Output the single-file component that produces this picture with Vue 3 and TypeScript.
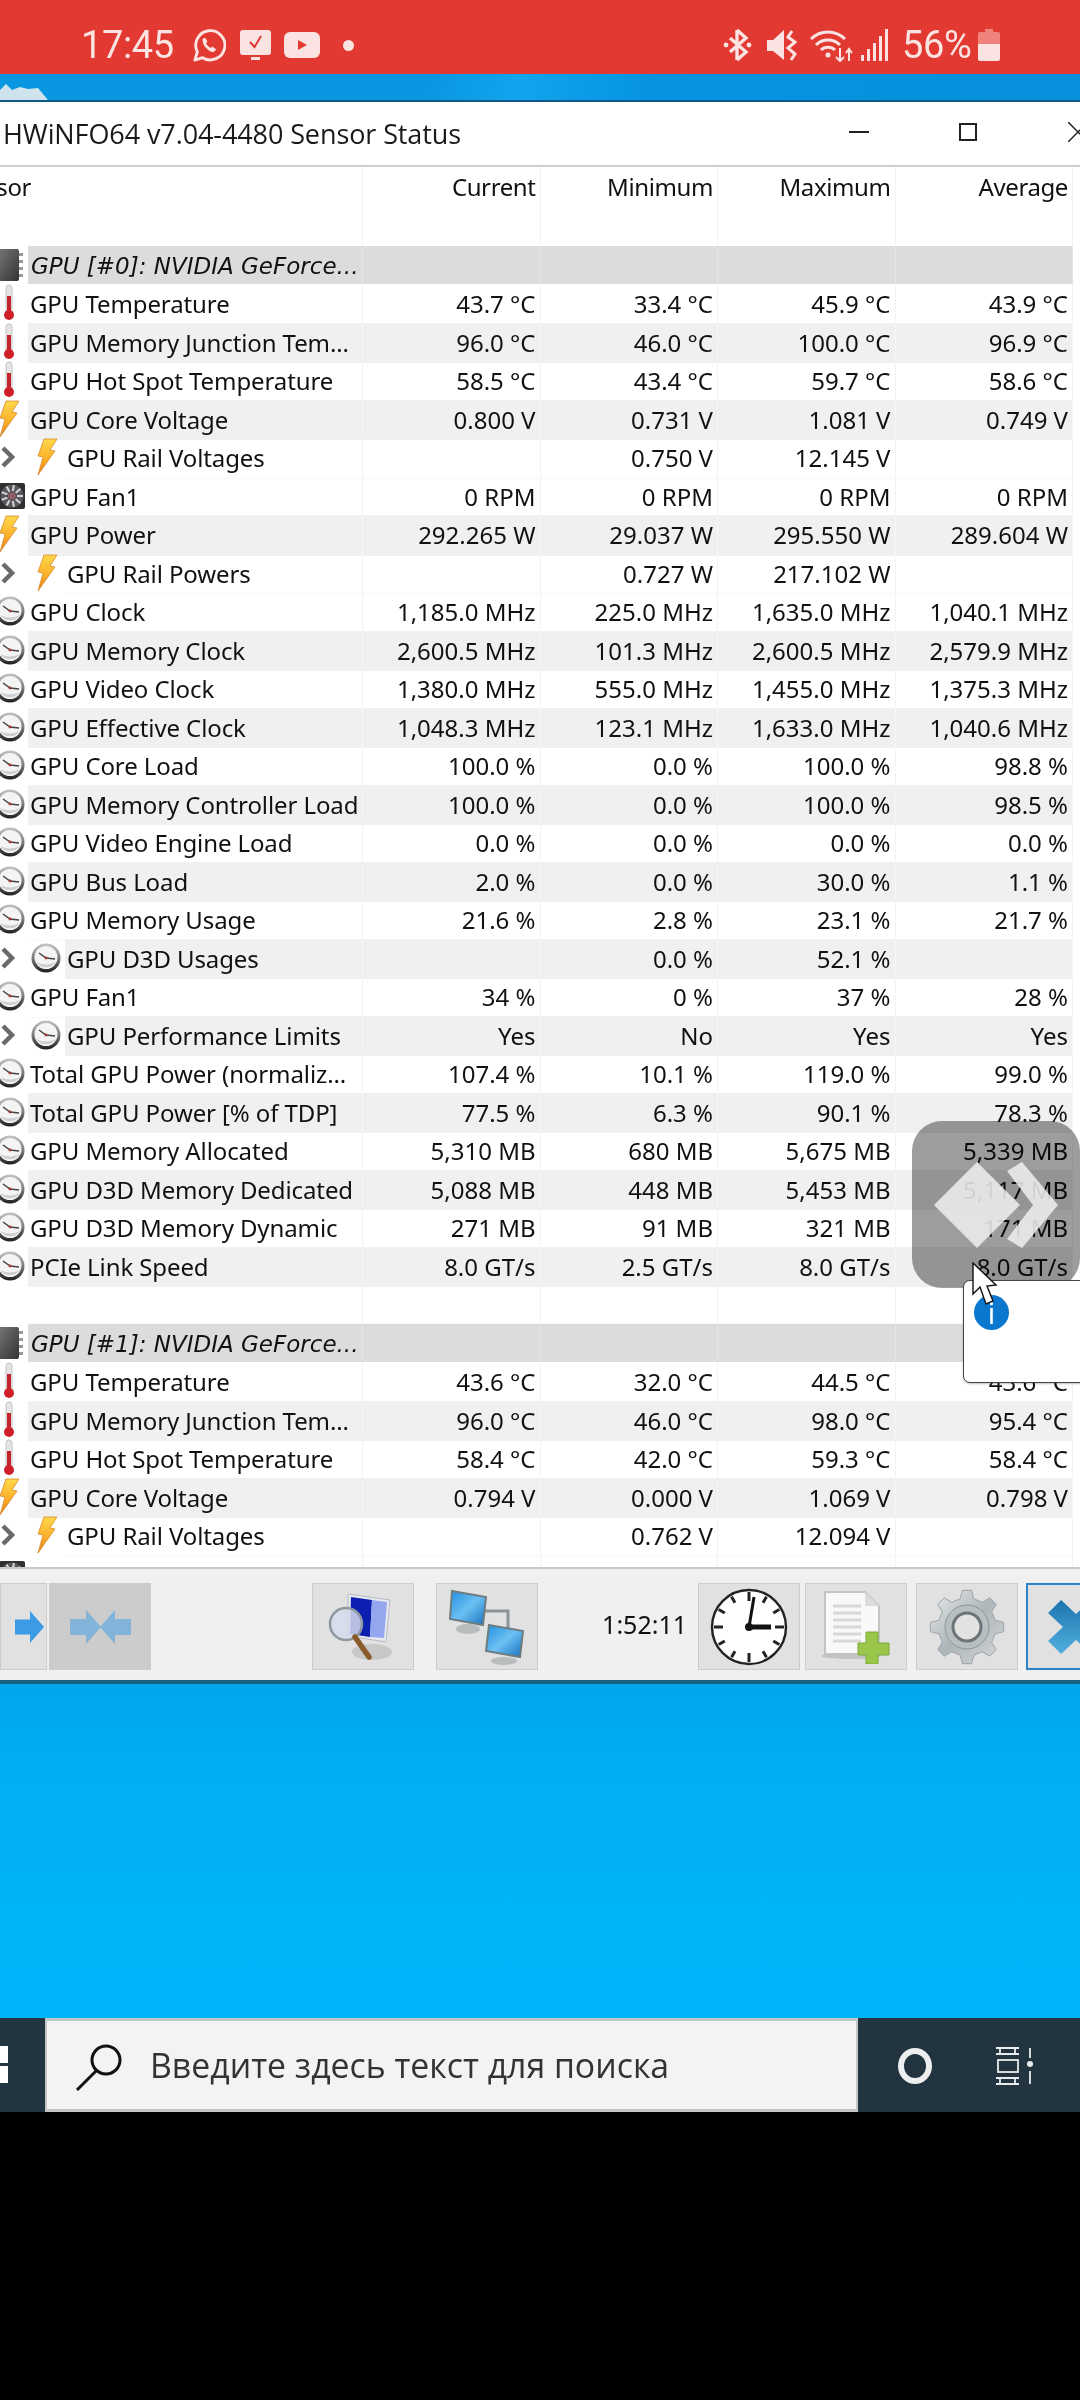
<template>
  <div class="screen">
    <svg class="sprite" width="0" height="0">
      <defs>
        <linearGradient id="boltFill" x1="0" y1="0" x2="0" y2="1">
          <stop offset="0" stop-color="#ffd84a" />
          <stop offset="0.55" stop-color="#fbb02a" />
          <stop offset="1" stop-color="#e07f1c" />
        </linearGradient>
        <linearGradient id="rimFill" x1="0" y1="0" x2="0" y2="1">
          <stop offset="0" stop-color="#c4c4c4" />
          <stop offset="0.5" stop-color="#7c7c7c" />
          <stop offset="1" stop-color="#1e1e1e" />
        </linearGradient>
        <linearGradient id="chipFill" x1="0" y1="0" x2="1" y2="1">
          <stop offset="0" stop-color="#777" />
          <stop offset="1" stop-color="#333" />
        </linearGradient>
        <linearGradient id="gearFill" x1="0" y1="0" x2="1" y2="1">
          <stop offset="0" stop-color="#e8eced" />
          <stop offset="0.5" stop-color="#aeb6b9" />
          <stop offset="1" stop-color="#d4d8da" />
        </linearGradient>
        <linearGradient id="screenFill" x1="0" y1="0" x2="1" y2="1">
          <stop offset="0" stop-color="#1f8fe0" />
          <stop offset="0.5" stop-color="#6cc0f2" />
          <stop offset="1" stop-color="#1670c0" />
        </linearGradient>
        <linearGradient id="closeFill" x1="0" y1="0" x2="0" y2="1">
          <stop offset="0" stop-color="#1b74ad" />
          <stop offset="1" stop-color="#54b0e0" />
        </linearGradient>

        <symbol id="ic-temp" viewBox="0 0 18 38">
          <rect x="6" y="1" width="6" height="29" rx="3" fill="#e4e4e4" stroke="#c4c4c4" />
          <rect x="7" y="12" width="4" height="18" fill="#c4242b" />
          <circle cx="9" cy="31" r="5" fill="#d01f28" />
        </symbol>
        <symbol id="ic-bolt" viewBox="0 0 20 38">
          <path d="M7 1 L20 1 L13 12 L18 13 L1 37 L6 19 L1 18 Z" fill="url(#boltFill)" stroke="#d98a2c" stroke-width="0.8" />
        </symbol>
        <symbol id="ic-gauge" viewBox="0 0 30 32">
          <circle cx="15" cy="16" r="14.5" fill="url(#rimFill)" />
          <circle cx="15" cy="15.5" r="11.5" fill="#f4f4f4" />
          <path d="M5 20 A12 12 0 0 0 25 20 A14 8 0 0 1 5 20 Z" fill="#cfcfcf" />
          <path d="M8 11 L15 16 L24 17" fill="none" stroke="#444" stroke-width="1.5" />
          <circle cx="15" cy="16" r="1.4" fill="#a33" />
        </symbol>
        <symbol id="ic-fan" viewBox="0 0 26 26">
          <rect width="26" height="26" rx="2" fill="#2f2f32" />
          <circle cx="13" cy="13" r="11.5" fill="#55555a" />
          <g stroke="#cfcfcf" stroke-width="2.2">
            <line v-for="a in fanAngles" :key="a" x1="13" y1="13" :x2="13 + 11 * Math.cos(a)" :y2="13 + 11 * Math.sin(a)" />
          </g>
          <circle cx="13" cy="13" r="4.5" fill="#8d5f68" stroke="#444" />
        </symbol>
        <symbol id="ic-chip" viewBox="0 0 24 32">
          <rect x="-2" y="0" width="21" height="32" rx="2" fill="url(#chipFill)" />
          <g fill="#9a9a9a">
            <rect x="19" y="4" width="4" height="3" />
            <rect x="19" y="11" width="4" height="3" />
            <rect x="19" y="18" width="4" height="3" />
            <rect x="19" y="25" width="4" height="3" />
          </g>
        </symbol>
        <symbol id="ic-arrow" viewBox="0 0 32 36">
          <path d="M0 10 H16 V1 L31 18 L16 35 V26 H0 Z" fill="#3b9be4" />
        </symbol>
      </defs>
    </svg>

    <header class="status-bar">
      <span class="clock-text">17:45</span>
      <svg class="st-whatsapp" viewBox="0 0 36 36">
        <path d="M4 33 L6.5 24.5 A15 15 0 1 1 12 30.5 Z" fill="none" stroke="#fbe3e1" stroke-width="3" stroke-linejoin="round" />
        <path d="M12 11 C11 15 15 23 23 25 L26 22 L22 19 L20.5 20.5 C18 19.5 16.5 18 15.5 15.5 L17 14 L14.5 10 Z" fill="#fbe3e1" />
      </svg>
      <svg class="st-monitor" viewBox="0 0 31 30">
        <path d="M3 0 H28 A3 3 0 0 1 31 3 V22 A3 3 0 0 1 28 25 H3 A3 3 0 0 1 0 22 V3 A3 3 0 0 1 3 0 Z M11 27 H20 V30 H11 Z" fill="#fbe3e1" />
        <path d="M10 12 L14.5 17 L21 6" fill="none" stroke="#e23a32" stroke-width="2" />
      </svg>
      <svg class="st-youtube" viewBox="0 0 36 26">
        <rect width="36" height="26" rx="6" fill="#fbe3e1" />
        <path d="M14 8 L23 13 L14 18 Z" fill="#e23a32" />
      </svg>
      <span class="st-dot"></span>
      <span class="st-spacer"></span>
      <svg class="st-bt" viewBox="0 0 29 34">
        <path d="M14 2 L23 10 L7 24 M14 32 L23 24 L7 10 M14 2 V32" fill="none" stroke="#fbe3e1" stroke-width="3.4" />
        <circle cx="3" cy="17" r="2.4" fill="#fbe3e1" />
        <circle cx="26" cy="17" r="2.4" fill="#fbe3e1" />
      </svg>
      <svg class="st-mute" viewBox="0 0 33 34">
        <path d="M0 12 H6 L17 2 V32 L6 23 H0 Z" fill="#fbe3e1" />
        <path d="M25 3 L21 9 L28 14 L21 20 L28 26 L24 32" fill="none" stroke="#fbe3e1" stroke-width="3" />
      </svg>
      <svg class="st-wifi" viewBox="0 0 43 34">
        <g fill="none" stroke="#fbe3e1" stroke-width="3">
          <path d="M1 11 A24 24 0 0 1 35 11" />
          <path d="M6 17 A17 17 0 0 1 30 17" />
          <path d="M11 22 A10 10 0 0 1 25 22" />
        </g>
        <circle cx="18" cy="27" r="2.5" fill="#fbe3e1" />
        <path d="M30 20 V33 M26 29 L30 33 L34 29 M39 33 V22 M36 25 L39 21 L42 25" fill="none" stroke="#fbe3e1" stroke-width="2" />
      </svg>
      <svg class="st-signal" viewBox="0 0 28 32">
        <g fill="#fbe3e1">
          <rect x="0" y="26" width="3" height="6" />
          <rect x="6" y="20" width="3" height="12" />
          <rect x="12" y="14" width="3" height="18" />
          <rect x="18" y="7" width="3" height="25" />
          <rect x="24" y="0" width="3" height="32" />
        </g>
      </svg>
      <span class="battery-text">56%</span>
      <svg class="st-battery" viewBox="0 0 22 32">
        <path d="M7 0 H15 V3 H20 A2 2 0 0 1 22 5 V15 H0 V5 A2 2 0 0 1 2 3 H7 Z" fill="#f0827c" />
        <path d="M0 15 H22 V30 A2 2 0 0 1 20 32 H2 A2 2 0 0 1 0 30 Z" fill="#fbe3e1" />
      </svg>
    </header>

    <div class="wall-top">
      <svg class="mountain" width="50" height="16" viewBox="0 0 50 16">
        <path d="M0 16 V6 L6 0 L12 6 L20 3 L28 5 L38 4 L48 16 Z" fill="#cfe3ec" />
      </svg>
    </div>

    <section class="window">
      <div class="title-bar">
        <span class="title">HWiNFO64 v7.04-4480 Sensor Status</span>
        <span class="win-min"></span>
        <span class="win-max"></span>
        <svg class="win-close" width="20" height="20" viewBox="0 0 20 20">
          <path d="M0 0 L20 20 M0 20 L20 0" stroke="#222" stroke-width="1.5" />
        </svg>
      </div>

      <div class="table">
        <div class="row head">
          <div class="head-name"><span>Sensor</span></div>
          <div v-for="c in columns" :key="c" class="val">{{ c }}</div>
        </div>

        <div
          v-for="(r, i) in rows"
          :key="i"
          class="row"
          :class="{ stripe: r.stripe, group: r.kind === 'group' }"
        >
          <div class="name">
            <div class="icons" :class="{ child: r.child }">
              <svg v-if="r.child" class="chevron" width="16" height="22" viewBox="0 0 16 22">
                <path d="M3 2 L12 11 L3 20" fill="none" stroke="#6a6a6a" stroke-width="4.5" />
              </svg>
              <svg v-if="r.icon" class="ic" :class="'ic-' + r.icon"><use :href="'#ic-' + r.icon" /></svg>
            </div>
            <div class="label">{{ r.name }}</div>
          </div>
          <div v-for="(v, j) in r.vals" :key="j" class="val">{{ v }}</div>
        </div>
      </div>

      <div class="toolbar">
        <button class="tb-btn btn-prev">
          <svg width="30" height="36"><use href="#ic-arrow" /></svg>
        </button>
        <button class="tb-btn btn-compare">
          <svg class="cmp" width="32" height="36"><use href="#ic-arrow" /></svg>
          <svg class="cmp flip" width="32" height="36"><use href="#ic-arrow" /></svg>
        </button>
        <button class="tb-btn btn-search">
          <svg width="70" height="74" viewBox="0 0 70 74">
            <path d="M20 4 L62 10 L58 52 L20 46 Z" fill="#e6e9ee" stroke="#b6bcc6" />
            <path d="M23 7 L44 10 L42 47 L22 44 Z" fill="#0c1fb0" />
            <path d="M44 10 L59 12 L56 48 L42 47 Z" fill="#93a6ee" />
            <ellipse cx="44" cy="62" rx="20" ry="8" fill="#c8c8c8" />
            <circle cx="18" cy="34" r="16" fill="#d5dcec" fill-opacity="0.85" stroke="#8f979f" stroke-width="2.5" />
            <path d="M27 47 L41 67" stroke="#8a5a2b" stroke-width="5.5" stroke-linecap="round" />
          </svg>
        </button>
        <button class="tb-btn btn-net">
          <svg width="78" height="76" viewBox="0 0 78 76">
            <path d="M36 22 H60 V40" fill="none" stroke="#8d9498" stroke-width="3" />
            <path d="M4 2 L38 8 L35 36 L2 30 Z" fill="url(#screenFill)" stroke="#6c7c80" stroke-width="2" />
            <ellipse cx="20" cy="40" rx="12" ry="5" fill="#b8bcbc" />
            <path d="M41 36 L75 42 L72 68 L38 62 Z" fill="url(#screenFill)" stroke="#6c7c80" stroke-width="2" />
            <ellipse cx="56" cy="72" rx="13" ry="4" fill="#b8bcbc" />
          </svg>
        </button>
        <span class="elapsed">1:52:11</span>
        <button class="tb-btn btn-clock">
          <svg width="78" height="78" viewBox="0 0 78 78">
            <circle cx="39" cy="39" r="37" fill="#fff" stroke="#222" stroke-width="2.4" />
            <line
              v-for="t in clockTicks"
              :key="t.id"
              :x1="t.x1"
              :y1="t.y1"
              :x2="t.x2"
              :y2="t.y2"
              stroke="#222"
              stroke-width="3"
            />
            <path d="M39 39 L44 9" stroke="#111" stroke-width="3" />
            <path d="M39 39 H61" stroke="#111" stroke-width="5" />
            <circle cx="39" cy="39" r="4" fill="#111" />
          </svg>
        </button>
        <button class="tb-btn btn-log">
          <svg width="70" height="74" viewBox="0 0 70 74">
            <ellipse cx="30" cy="66" rx="30" ry="3" fill="#c4c4c4" />
            <path d="M4 2 H44 L58 16 V64 H4 Z" fill="#f8f8f8" stroke="#c4c4c4" stroke-width="2" />
            <path d="M44 2 V16 H58 Z" fill="#dcdcdc" />
            <g stroke="#d8d8d8" stroke-width="3">
              <line x1="12" y1="16" x2="40" y2="16" />
              <line x1="12" y1="23" x2="40" y2="23" />
              <line x1="12" y1="30" x2="40" y2="30" />
              <line x1="12" y1="37" x2="40" y2="37" />
              <line x1="12" y1="44" x2="40" y2="44" />
              <line x1="12" y1="51" x2="40" y2="51" />
            </g>
            <path d="M45 42 H57 V53 H68 V65 H57 V74 H45 V65 H37 V53 H45 Z" fill="#9ac649" stroke="#7ea83a" />
          </svg>
        </button>
        <button class="tb-btn btn-gear">
          <svg width="76" height="76" viewBox="0 0 76 76">
            <path :d="gearPath" fill="url(#gearFill)" stroke="#9ea5a8" />
            <circle cx="38" cy="38" r="22" fill="#b8bfc2" stroke="#8f9699" />
            <circle cx="38" cy="38" r="14" fill="#e2e2e2" stroke="#6d7477" stroke-width="3" />
          </svg>
        </button>
        <button class="tb-btn btn-close">
          <svg width="56" height="54" viewBox="0 0 60 58">
            <path d="M14 0 L30 15 L46 0 L60 14 L44 29 L60 44 L46 58 L30 43 L14 58 L0 44 L16 29 L0 14 Z" fill="url(#closeFill)" />
          </svg>
        </button>
      </div>
    </section>

    <div class="wall-main"></div>

    <footer class="taskbar">
      <div class="win-logo"><i></i><i></i></div>
      <div class="search">
        <svg class="search-ic" width="52" height="48" viewBox="0 0 52 48">
          <ellipse cx="33" cy="16" rx="14" ry="14" fill="none" stroke="#111" stroke-width="3" />
          <path d="M23 27 L4 46" stroke="#111" stroke-width="3" />
        </svg>
        <span class="search-text">Введите здесь текст для поиска</span>
      </div>
      <span class="cortana"></span>
      <svg class="taskview" width="38" height="38" viewBox="0 0 38 38">
        <g fill="none" stroke="#e8ecee" stroke-width="1.8">
          <path d="M1 1 H24 M1 7 H24 M5 1 V7 M20 1 V7" />
          <rect x="3" y="13" width="20" height="12" />
          <path d="M1 31 H24 M1 37 H24 M5 31 V37 M20 31 V37" />
          <path d="M35 1 V11 M35 24 V37" />
        </g>
        <circle cx="35" cy="17" r="3" fill="#e8ecee" />
      </svg>
    </footer>

    <div class="nav-black"></div>

    <!-- remote desktop overlay, lies over the table -->
    <div class="rd-badge"></div>
    <svg class="rd-logo" width="168" height="167" viewBox="0 0 168 167">
      <path d="M65 41 L108 84 L65 127 L22 84 Z" fill="#ededed" fill-opacity="0.88" />
      <path d="M95 50 L110 41 L146 84 L110 127 L95 118 L121 84 Z" fill="#ededed" fill-opacity="0.88" />
    </svg>
    <div class="tip">
      <span class="tip-info">i</span>
    </div>
    <svg class="cursor" width="26" height="46" viewBox="0 0 26 46">
      <path d="M1 1 L1 32 L8 25 L14 42 L21 39 L15 24 L24 23 Z" fill="#fff" stroke="#111" stroke-width="1.4" />
    </svg>
  </div>
</template>

<script setup lang="ts">
type IconName = 'temp' | 'bolt' | 'fan' | 'gauge' | 'chip'

interface Row {
  kind?: 'group'
  name: string
  icon?: IconName
  child?: boolean
  stripe?: boolean
  vals: string[]
}

const columns = ['Current', 'Minimum', 'Maximum', 'Average']

const row = (
  name: string,
  icon: IconName,
  vals: string[],
  opts: { child?: boolean; stripe?: boolean } = {}
): Row => ({ name, icon, vals, ...opts })

const S = { stripe: true }
const C = { child: true }

const rows: Row[] = [
  { kind: 'group', name: 'GPU [#0]: NVIDIA GeForce...', icon: 'chip', vals: ['', '', '', ''] },
  row('GPU Temperature', 'temp', ['43.7 °C', '33.4 °C', '45.9 °C', '43.9 °C']),
  row('GPU Memory Junction Tem...', 'temp', ['96.0 °C', '46.0 °C', '100.0 °C', '96.9 °C'], S),
  row('GPU Hot Spot Temperature', 'temp', ['58.5 °C', '43.4 °C', '59.7 °C', '58.6 °C']),
  row('GPU Core Voltage', 'bolt', ['0.800 V', '0.731 V', '1.081 V', '0.749 V'], S),
  row('GPU Rail Voltages', 'bolt', ['', '0.750 V', '12.145 V', ''], C),
  row('GPU Fan1', 'fan', ['0 RPM', '0 RPM', '0 RPM', '0 RPM']),
  row('GPU Power', 'bolt', ['292.265 W', '29.037 W', '295.550 W', '289.604 W'], S),
  row('GPU Rail Powers', 'bolt', ['', '0.727 W', '217.102 W', ''], C),
  row('GPU Clock', 'gauge', ['1,185.0 MHz', '225.0 MHz', '1,635.0 MHz', '1,040.1 MHz']),
  row('GPU Memory Clock', 'gauge', ['2,600.5 MHz', '101.3 MHz', '2,600.5 MHz', '2,579.9 MHz'], S),
  row('GPU Video Clock', 'gauge', ['1,380.0 MHz', '555.0 MHz', '1,455.0 MHz', '1,375.3 MHz']),
  row('GPU Effective Clock', 'gauge', ['1,048.3 MHz', '123.1 MHz', '1,633.0 MHz', '1,040.6 MHz'], S),
  row('GPU Core Load', 'gauge', ['100.0 %', '0.0 %', '100.0 %', '98.8 %']),
  row('GPU Memory Controller Load', 'gauge', ['100.0 %', '0.0 %', '100.0 %', '98.5 %'], S),
  row('GPU Video Engine Load', 'gauge', ['0.0 %', '0.0 %', '0.0 %', '0.0 %']),
  row('GPU Bus Load', 'gauge', ['2.0 %', '0.0 %', '30.0 %', '1.1 %'], S),
  row('GPU Memory Usage', 'gauge', ['21.6 %', '2.8 %', '23.1 %', '21.7 %']),
  row('GPU D3D Usages', 'gauge', ['', '0.0 %', '52.1 %', ''], { child: true, stripe: true }),
  row('GPU Fan1', 'gauge', ['34 %', '0 %', '37 %', '28 %']),
  row('GPU Performance Limits', 'gauge', ['Yes', 'No', 'Yes', 'Yes'], { child: true, stripe: true }),
  row('Total GPU Power (normaliz...', 'gauge', ['107.4 %', '10.1 %', '119.0 %', '99.0 %']),
  row('Total GPU Power [% of TDP]', 'gauge', ['77.5 %', '6.3 %', '90.1 %', '78.3 %'], S),
  row('GPU Memory Allocated', 'gauge', ['5,310 MB', '680 MB', '5,675 MB', '5,339 MB']),
  row('GPU D3D Memory Dedicated', 'gauge', ['5,088 MB', '448 MB', '5,453 MB', '5,117 MB'], S),
  row('GPU D3D Memory Dynamic', 'gauge', ['271 MB', '91 MB', '321 MB', '171 MB']),
  row('PCIe Link Speed', 'gauge', ['8.0 GT/s', '2.5 GT/s', '8.0 GT/s', '8.0 GT/s'], S),
  { name: '', vals: ['', '', '', ''] },
  { kind: 'group', name: 'GPU [#1]: NVIDIA GeForce...', icon: 'chip', vals: ['', '', '', ''] },
  row('GPU Temperature', 'temp', ['43.6 °C', '32.0 °C', '44.5 °C', '43.6 °C']),
  row('GPU Memory Junction Tem...', 'temp', ['96.0 °C', '46.0 °C', '98.0 °C', '95.4 °C'], S),
  row('GPU Hot Spot Temperature', 'temp', ['58.4 °C', '42.0 °C', '59.3 °C', '58.4 °C']),
  row('GPU Core Voltage', 'bolt', ['0.794 V', '0.000 V', '1.069 V', '0.798 V'], S),
  row('GPU Rail Voltages', 'bolt', ['', '0.762 V', '12.094 V', ''], C),
  row('', 'fan', ['', '', '', ''])
]

const fanAngles = Array.from({ length: 9 }, (_, i) => (i * 2 * Math.PI) / 9)

const clockTicks = Array.from({ length: 12 }, (_, i) => {
  const a = (i * Math.PI) / 6
  const inner = i % 3 === 0 ? 26 : 28
  return {
    id: i,
    x1: 39 + inner * Math.sin(a),
    y1: 39 - inner * Math.cos(a),
    x2: 39 + 35 * Math.sin(a),
    y2: 39 - 35 * Math.cos(a)
  }
})

// eight-tooth gear outline
const gearPath = (() => {
  const pts: string[] = []
  const teeth = 8
  for (let i = 0; i < teeth; i++) {
    const base = (i * 2 * Math.PI) / teeth
    const step = (2 * Math.PI) / teeth
    const shape: [number, number][] = [
      [-0.3, 29],
      [-0.16, 37],
      [0.16, 37],
      [0.3, 29]
    ]
    for (const [off, r] of shape) {
      const a = base + off * step
      pts.push(`${(38 + r * Math.cos(a)).toFixed(1)} ${(38 + r * Math.sin(a)).toFixed(1)}`)
    }
  }
  return 'M' + pts.join(' L') + ' Z'
})()
</script>

<style scoped>
.sprite {
  position: absolute;
}

.screen {
  position: relative;
  width: 1080px;
  height: 2400px;
  overflow: hidden;
  background: #000;
  display: flex;
  flex-direction: column;
  font-family: "Noto Sans", "DejaVu Sans", sans-serif;
  color: #111;
}

/* status bar */
.status-bar {
  height: 74px;
  flex: none;
  background: #e23a32;
  display: flex;
  align-items: center;
  padding: 16px 80px 0 81px;
  box-sizing: border-box;
  color: #fbe3e1;
  font-family: Roboto, sans-serif;
}
.clock-text {
  font-size: 38px;
  width: 110px;
  letter-spacing: -0.4px;
}
.st-whatsapp { width: 35px; height: 35px; }
.st-monitor { width: 31px; height: 30px; margin-left: 14px; }
.st-youtube { width: 36px; height: 26px; margin-left: 13px; }
.st-dot { width: 11px; height: 11px; border-radius: 50%; background: #fbe3e1; margin-left: 23px; }
.st-spacer { flex: 1; }
.st-bt { width: 29px; height: 34px; }
.st-mute { width: 33px; height: 34px; margin-left: 15px; }
.st-wifi { width: 43px; height: 34px; margin-left: 10px; }
.st-signal { width: 28px; height: 32px; margin-left: 8px; }
.battery-text { font-size: 38px; margin-left: 13px; width: 76px; letter-spacing: -0.4px; }
.st-battery { width: 22px; height: 32px; }

/* desktop strip above the window */
.wall-top {
  height: 28px;
  flex: none;
  position: relative;
  box-sizing: border-box;
  border-bottom: 2px solid #0f5a85;
  background: linear-gradient(100deg, #0a97e2 0%, #0a97e2 40%, #12a4ee 48%, #0694e0 60%, #0790dc 100%);
}
.mountain {
  position: absolute;
  left: 0;
  bottom: 0;
}

/* hwinfo window */
.window {
  flex: none;
  background: #fff;
  display: flex;
  flex-direction: column;
  overflow: hidden;
}
.title-bar {
  height: 63px;
  display: flex;
  align-items: center;
  flex: none;
}
.title {
  font-family: "Open Sans", sans-serif;
  font-size: 27px;
  margin-left: 3px;
  letter-spacing: -0.1px;
  width: 846px;
  flex: none;
  color: #1a1a1a;
  white-space: nowrap;
}
.win-min {
  width: 20px;
  height: 2px;
  flex: none;
  background: #222;
  margin-bottom: 4px;
}
.win-max {
  width: 18px;
  height: 18px;
  flex: none;
  box-sizing: border-box;
  border: 2px solid #222;
  margin: 0 0 4px 90px;
}
.win-close {
  margin: 0 0 4px 91px;
  flex: none;
}

.table {
  height: 1400px;
  overflow: hidden;
  border-top: 2px solid #cfcfcf;
  flex: none;
  font-size: 24px;
}
.row {
  display: grid;
  grid-template-columns: 363px repeat(4, 177.5px) 7px;
  height: 38.5px;
  line-height: 39.5px;
  white-space: nowrap;
}
.row.head {
  height: 78.5px;
  letter-spacing: -0.4px;
}
.head-name {
  overflow: hidden;
  border-right: 1px solid #f3f3f3;
}
.head-name span {
  display: block;
  margin-left: -44px;
}
.name {
  display: flex;
  overflow: hidden;
}
.icons {
  width: 28px;
  flex: none;
  position: relative;
  overflow: hidden;
}
.icons.child {
  width: 65px;
}
.label {
  flex: 1;
  padding-left: 2px;
  letter-spacing: -0.1px;
  border-right: 1px solid #f3f3f3;
  border-bottom: 1px solid #f8f8f8;
}
.val {
  text-align: right;
  padding-right: 4px;
  border-right: 1px solid #f3f3f3;
  border-bottom: 1px solid #f8f8f8;
  min-width: 0;
}
.head .val {
  border-bottom: 0;
}
.stripe .label,
.stripe .val {
  background: #f0f0f0;
  border-right-color: #f6f6f6;
  border-bottom-color: #f0f0f0;
}
.group .label,
.group .val {
  background: #dcdcdc;
  border-right-color: #e4e4e4;
  border-bottom-color: #dcdcdc;
}
.group .label {
  font-family: "DejaVu Sans", sans-serif;
  font-style: italic;
  font-size: 23px;
  line-height: 40.5px;
  padding-left: 3px;
  letter-spacing: 0;
}

.chevron {
  position: absolute;
  left: 0;
  top: 8px;
}
.ic {
  position: absolute;
}
.ic-temp { left: 0; top: 0; width: 18px; height: 38px; }
.ic-bolt { left: -1px; top: 0; width: 20px; height: 38px; }
.ic-gauge { left: -5px; top: 3px; width: 30px; height: 32px; }
.ic-fan { left: -1px; top: 6px; width: 26px; height: 26px; }
.ic-chip { left: 0; top: 3px; width: 24px; height: 32px; }
.child .ic-bolt { left: 37px; }
.child .ic-gauge { left: 31px; }

/* bottom toolbar */
.toolbar {
  height: 113px;
  flex: none;
  box-sizing: border-box;
  background: #f0f0f0;
  border-top: 2px solid #c9c9c9;
  display: flex;
  align-items: flex-start;
  padding-top: 14px;
}
.tb-btn {
  height: 87px;
  padding: 0;
  flex: none;
  box-sizing: border-box;
  background: #e1e1e1;
  border: 1px solid #cdcdcd;
  display: flex;
  align-items: center;
  justify-content: center;
}
.btn-prev { width: 47px; justify-content: flex-end; padding-right: 1px; }
.btn-compare { width: 102px; margin-left: 2px; background: #cccccc; }
.cmp { opacity: 0.5; }
.cmp.flip { transform: scaleX(-1); margin-left: -3px; }
.btn-search { width: 102px; margin-left: 161px; }
.btn-net { width: 102px; margin-left: 22px; }
.elapsed {
  width: 160px;
  text-align: right;
  padding-right: 11px;
  box-sizing: border-box;
  font-size: 25px;
  line-height: 83px;
  flex: none;
}
.btn-clock { width: 102px; }
.btn-log { width: 102px; margin-left: 5px; }
.btn-gear { width: 102px; margin-left: 9px; }
.btn-close {
  width: 102px;
  margin-left: 8px;
  border: 2px solid #2b84c6;
  justify-content: flex-start;
  padding-left: 20px;
}

.wall-main {
  flex: none;
  height: 338px;
  box-sizing: border-box;
  border-top: 4px solid #17607f;
  background: linear-gradient(180deg, #00a6ec 0%, #00b0f4 30%, #00b4f9 100%);
}

/* windows taskbar */
.taskbar {
  height: 94px;
  flex: none;
  background: #22343f;
  display: flex;
  align-items: center;
}
.win-logo {
  width: 8px;
  height: 37px;
  margin-top: -1px;
  flex: none;
  display: flex;
  flex-direction: column;
  justify-content: space-between;
}
.win-logo i {
  display: block;
  height: 17px;
  background: #fff;
}
.search {
  width: 813px;
  height: 94px;
  margin-left: 37px;
  box-sizing: border-box;
  background: #f3f3f3;
  border: 3px solid #c2c6c6;
  border-right-width: 2px;
  border-left-width: 2px;
  display: flex;
  align-items: center;
  flex: none;
}
.search-ic {
  margin-left: 26px;
  margin-top: 6px;
  flex: none;
}
.search-text {
  font-size: 33.8px;
  margin-left: 25px;
  color: #333;
  font-family: "Open Sans", sans-serif;
  white-space: nowrap;
}
.cortana {
  width: 34px;
  height: 36px;
  margin-left: 40px;
  margin-top: 2px;
  box-sizing: border-box;
  border-radius: 50%;
  border: 6px solid #eceeef;
  flex: none;
}
.taskview {
  margin-left: 63px;
  margin-top: 1px;
  flex: none;
}
.nav-black {
  flex: 1;
  background: #000;
}

/* overlay bits */
.rd-badge {
  position: absolute;
  left: 912px;
  top: 1121px;
  width: 168px;
  height: 167px;
  border-radius: 30px;
  background: #9d9d9d;
  mix-blend-mode: multiply;
}
.rd-logo {
  position: absolute;
  left: 912px;
  top: 1121px;
}
.tip {
  position: absolute;
  left: 963px;
  top: 1280px;
  width: 140px;
  height: 103px;
  box-sizing: border-box;
  background: #fff;
  border: 1px solid #444;
  border-radius: 7px;
  box-shadow: 0 1px 2px rgba(0, 0, 0, 0.25);
}
.tip-info {
  position: absolute;
  left: 10px;
  top: 14px;
  width: 35px;
  height: 35px;
  border-radius: 50%;
  background: #0b78d0;
  color: #fff;
  font-size: 29px;
  line-height: 35px;
  text-align: center;
}
.cursor {
  position: absolute;
  left: 972px;
  top: 1262px;
}
</style>

<style>
html,
body {
  margin: 0;
  background: #000;
}
</style>
